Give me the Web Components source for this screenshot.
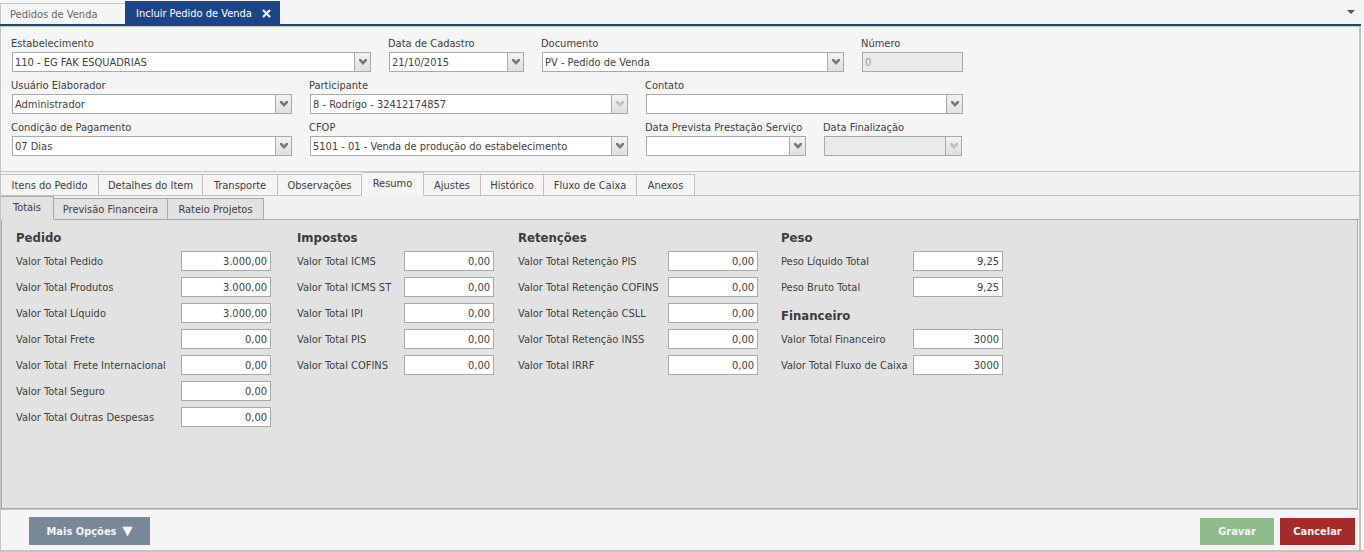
<!DOCTYPE html>
<html lang="pt-BR">
<head>
<meta charset="utf-8">
<title>Incluir Pedido de Venda</title>
<style>
  html, body { margin: 0; }
  body {
    font: 11px/16px "DejaVu Sans Condensed", "DejaVu Sans", sans-serif;
    color: #404040;
    background: #f5f5f5;
  }
</style>
</head>
<body>
<order-page></order-page>

<script>
const define = (name, render, setup) => {
  customElements.define(name, class extends HTMLElement {
    connectedCallback() {
      if (this.shadowRoot) return;
      const t = document.createElement('template');
      t.innerHTML = render(this);
      this.attachShadow({ mode: 'open' }).appendChild(t.content.cloneNode(true));
      if (setup) setup(this);
    }
  });
};

/* Labelled drop-down or text box. */
define('form-field', el => {
  const value = el.getAttribute('value') || '';
  const off = el.hasAttribute('disabled') ? 'disabled' : '';
  const control = el.getAttribute('type') === 'text'
    ? `<input id="c" value="${value}" ${off}>`
    : `<select id="c" ${off}><option>${value}</option></select>
       <span class="arrow"><svg width="10" height="8" viewBox="0 0 10 8"><path d="M1 1h2l2 2.200L7 1h2v1.800L5 7 1 2.800z"/></svg></span>`;
  return `
  <style>
    :host { display: block; flex: none; width: var(--w); }
    label { display: block; height: 17px; line-height: 18px; margin-left: -1px; white-space: nowrap; }
    .box { display: grid; height: 20px; }
    select, input {
      grid-area: 1 / 1; appearance: none; box-sizing: border-box; width: 100%; height: 20px;
      margin: 0; padding: 2px 20px 0 2px; border: 1px solid #a9a9a9; border-radius: 0;
      background: #fff; font: inherit; color: #404040; opacity: 1;
    }
    input { padding-top: 1px; }
    :disabled { background: #eaeaea; color: #999; }
    .arrow {
      grid-area: 1 / 1; justify-self: end; box-sizing: border-box; width: 17px; height: 20px;
      border: 1px solid #a9a9a9; background: linear-gradient(#f2f2f2, #e0e0e0);
      display: grid; place-items: center; pointer-events: none;
    }
    svg { fill: #777; }
    :disabled + .arrow svg, :host([locked]) svg { fill: #c0c0c0; }
  </style>
  <label for="c">${el.getAttribute('label')}</label>
  <div class="box">${control}</div>`;
}, el => el.style.setProperty('--w', el.getAttribute('width') + 'px'));

/* Row of form fields. */
define('field-row', () => `
  <style>:host { display: flex; gap: 18px; }</style><slot></slot>`);

/* Strip of document tabs above the page. */
define('document-tabs', () => `
  <style>
    :host { display: flex; align-items: flex-end; height: 24px; border-bottom: 2px solid #1c4587; background: #f5f5f5; }
    button { box-sizing: border-box; font: inherit; margin: 0; border: 0; padding: 0; text-align: left; white-space: nowrap; }
    .idle { width: 125px; height: 21px; padding: 2px 0 0 9px; background: #f5f5f5; color: #666; border: solid #c8c8c8; border-width: 1px 0 0 1px; }
    .active { display: flex; align-items: center; justify-content: space-between; width: 155px; height: 23px; padding: 2px 9px 0 11px; background: #1c4587; color: #fff; }
    .more { margin-left: auto; width: 24px; height: 24px; padding: 0 0 0 10px; background: none; }
    svg { display: block; }
  </style>
  <button class="idle" role="tab">Pedidos de Venda</button>
  <button class="active" role="tab" aria-selected="true">Incluir Pedido de Venda
    <svg width="9" height="9" viewBox="0 0 9 9"><path d="M1 1l7 7M8 1L1 8" stroke="#fff" stroke-width="2"/></svg>
  </button>
  <button class="more" aria-label="Mais abas"><svg width="8" height="4" viewBox="0 0 8 4"><path d="M0 0h8L4 4z" fill="#555"/></svg></button>`);

/* Tab strip; each item is "text:width". */
define('tab-strip', el => {
  const items = el.getAttribute('items').split('|').map(s => s.split(':'));
  const active = el.getAttribute('active');
  return `
  <style>
    :host { display: flex; align-items: flex-end; height: 24px; background: #f0f0f0; box-shadow: inset 0 -1px var(--line); }
    button {
      flex: none; box-sizing: border-box; height: 22px; margin: 0; padding: 2px 0 0;
      border: 1px solid var(--line); border-left-width: 0; background: var(--face);
      font: inherit; color: #404040; white-space: nowrap; text-align: center;
    }
    button:first-child { border-left-width: 1px; }
    button[aria-selected=true] { height: 24px; border-bottom-color: var(--face); padding: 0; }
  </style>
  ${items.map(([t, w]) => `<button role="tab" aria-selected="${t === active}" style="width:${w}px">${t}</button>`).join('')}`;
});

/* Column of totals: headings are slotted around the amount rows. */
define('totals-column', () => `
  <style>
    :host { display: flex; flex-direction: column; gap: 6px; }
    ::slotted(h2) { box-sizing: border-box; height: 20px; margin: 0; padding-top: 5px; font-size: 13px; line-height: 16px; color: #3c3c3c; }
  </style><slot></slot>`);

define('amount-row', el => `
  <style>
    :host { display: flex; align-items: center; height: 20px; }
    label { flex: none; width: var(--label); padding-top: 2px; white-space: pre; }
    input {
      box-sizing: border-box; width: 90px; height: 20px; margin: 0; padding: 0 3px;
      border: 1px solid #a9a9a9; background: #fff; font: inherit; color: #404040; text-align: right;
    }
  </style>
  <label for="v">${el.getAttribute('label')}</label><input id="v" value="${el.getAttribute('value')}">`);

define('action-button', () => `
  <style>
    :host { display: block; }
    button {
      display: flex; align-items: center; justify-content: center; gap: 6px; box-sizing: border-box;
      width: var(--w); height: var(--h, 27px); margin: 0; padding: 2px 0 0; border: 0;
      background: var(--bg); color: #f5f5f5; font: inherit; font-weight: bold; white-space: nowrap;
    }
    ::slotted(span) { font: 13px/14px "DejaVu Sans", sans-serif; padding-bottom: 2px; }
  </style><button><slot></slot></button>`);

define('order-page', () => `
  <style>
    :host { display: flex; flex-direction: column; box-sizing: border-box; min-height: 100vh; padding-right: 3px; border-bottom: 2px solid #c4c4c4; }
    .frame { flex: 1; display: flex; flex-direction: column; border: solid #c4c4c4; border-width: 1px 2px 0 1px; }
    form { display: flex; flex-direction: column; gap: 5px; padding: 8px 11px 15px; border-bottom: 1px solid #c4c4c4; }
    .main { --line: #c0c0c0; --face: #f5f5f5; }
    .sub { --line: #a9a9a9; --face: #e2e2e2; }
    .panel {
      flex: 1; display: grid; align-content: start;
      grid-template-columns: 281px 221px 263px 222px;
      margin-right: 1px; padding: 5px 14px; background: #e2e2e2;
      border: solid #a9a9a9; border-width: 0 1px 1px;
    }
    .c1 { --label: 165px; } .c2 { --label: 107px; } .c3 { --label: 150px; } .c4 { --label: 132px; }
    footer { display: flex; align-items: center; gap: 6px; padding: 7px 4px 5px 28px; border-top: 1px solid #c4c4c4; }
    .more { --w: 121px; --h: 28px; --bg: #778899; margin-right: auto; }
    .save { --w: 74px; --bg: #8fbc8b; }
    .cancel { --w: 75px; --bg: #a52a2a; }
  </style>
  <document-tabs></document-tabs>
  <div class="frame">
    <form>
      <field-row>
        <form-field width="359" label="Estabelecimento" value="110 - EG FAK ESQUADRIAS"></form-field>
        <form-field width="135" label="Data de Cadastro" value="21/10/2015"></form-field>
        <form-field width="302" label="Documento" value="PV - Pedido de Venda"></form-field>
        <form-field width="101" label="Número" value="0" type="text" disabled></form-field>
      </field-row>
      <field-row>
        <form-field width="280" label="Usuário Elaborador" value="Administrador"></form-field>
        <form-field width="318" label="Participante" value="8 - Rodrigo - 32412174857" locked></form-field>
        <form-field width="317" label="Contato"></form-field>
      </field-row>
      <field-row>
        <form-field width="280" label="Condição de Pagamento" value="07 Dias"></form-field>
        <form-field width="318" label="CFOP" value="5101 - 01 - Venda de produção do estabelecimento"></form-field>
        <form-field width="160" label="Data Prevista Prestação Serviço"></form-field>
        <form-field width="138" label="Data Finalização" disabled></form-field>
      </field-row>
    </form>
    <tab-strip class="main" active="Resumo" items="Itens do Pedido:98|Detalhes do Item:104|Transporte:75|Observações:84|Resumo:62|Ajustes:57|Histórico:63|Fluxo de Caixa:93|Anexos:58"></tab-strip>
    <tab-strip class="sub" active="Totais" items="Totais:53|Previsão Financeira:114|Rateio Projetos:96"></tab-strip>
    <div class="panel">
      <totals-column class="c1">
        <h2>Pedido</h2>
        <amount-row label="Valor Total Pedido" value="3.000,00"></amount-row>
        <amount-row label="Valor Total Produtos" value="3.000,00"></amount-row>
        <amount-row label="Valor Total Líquido" value="3.000,00"></amount-row>
        <amount-row label="Valor Total Frete" value="0,00"></amount-row>
        <amount-row label="Valor Total  Frete Internacional" value="0,00"></amount-row>
        <amount-row label="Valor Total Seguro" value="0,00"></amount-row>
        <amount-row label="Valor Total Outras Despesas" value="0,00"></amount-row>
      </totals-column>
      <totals-column class="c2">
        <h2>Impostos</h2>
        <amount-row label="Valor Total ICMS" value="0,00"></amount-row>
        <amount-row label="Valor Total ICMS ST" value="0,00"></amount-row>
        <amount-row label="Valor Total IPI" value="0,00"></amount-row>
        <amount-row label="Valor Total PIS" value="0,00"></amount-row>
        <amount-row label="Valor Total COFINS" value="0,00"></amount-row>
      </totals-column>
      <totals-column class="c3">
        <h2>Retenções</h2>
        <amount-row label="Valor Total Retenção PIS" value="0,00"></amount-row>
        <amount-row label="Valor Total Retenção COFINS" value="0,00"></amount-row>
        <amount-row label="Valor Total Retenção CSLL" value="0,00"></amount-row>
        <amount-row label="Valor Total Retenção INSS" value="0,00"></amount-row>
        <amount-row label="Valor Total IRRF" value="0,00"></amount-row>
      </totals-column>
      <totals-column class="c4">
        <h2>Peso</h2>
        <amount-row label="Peso Líquido Total" value="9,25"></amount-row>
        <amount-row label="Peso Bruto Total" value="9,25"></amount-row>
        <h2>Financeiro</h2>
        <amount-row label="Valor Total Financeiro" value="3000"></amount-row>
        <amount-row label="Valor Total Fluxo de Caixa" value="3000"></amount-row>
      </totals-column>
    </div>
    <footer>
      <action-button class="more">Mais Opções <span>▼</span></action-button>
      <action-button class="save">Gravar</action-button>
      <action-button class="cancel">Cancelar</action-button>
    </footer>
  </div>`);
</script>
</body>
</html>
